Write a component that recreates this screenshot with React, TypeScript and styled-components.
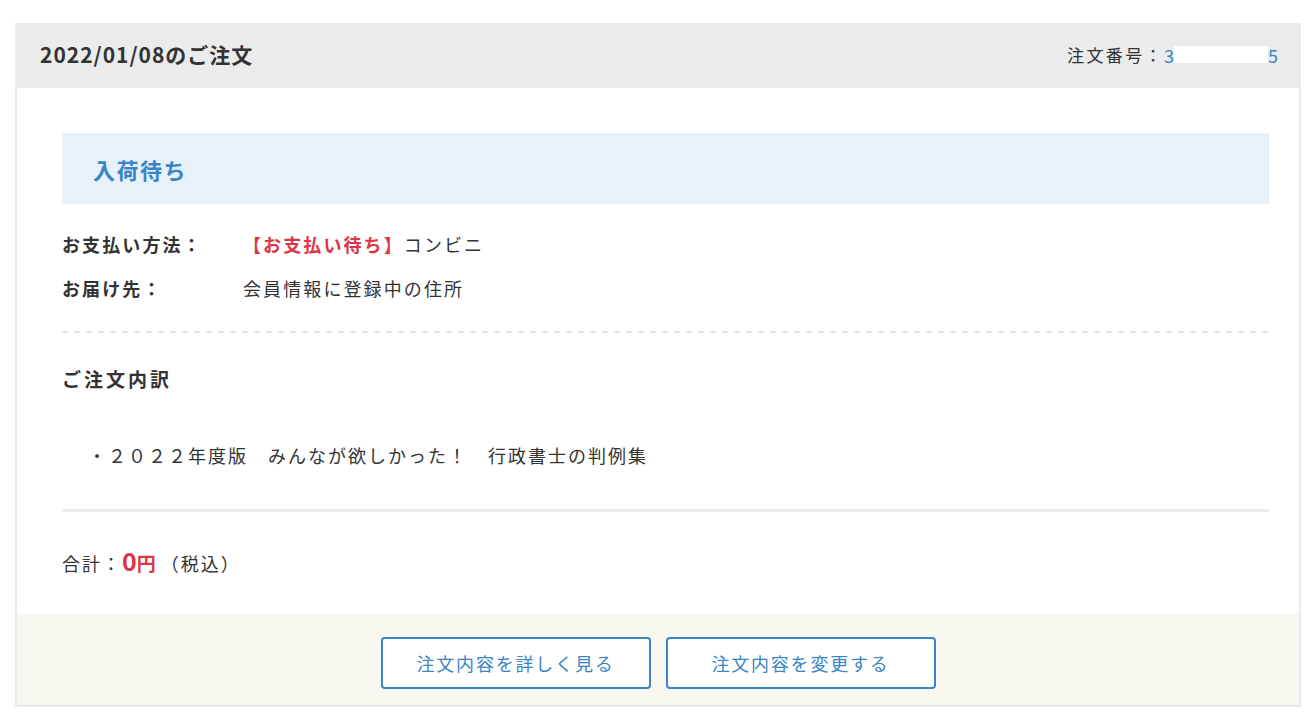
import styled, {createGlobalStyle} from "styled-components";

const GlobalStyle = createGlobalStyle`
  body {
    margin: 0;
    background: #fff;
    font-family: "Noto Sans CJK JP", "Noto Sans", sans-serif;
    color: #333;
  }
`;

const Page = styled.div`
  padding: 23px 7px 16px 15px;
`;

const Card = styled.section`
  border: 2px solid #eaeaea;
  border-top: none;
  background: #fff;
`;

const Header = styled.header`
  display: flex;
  align-items: center;
  justify-content: space-between;
  height: 65px;
  padding: 0 23px 0 25px;
  margin: 0 -2px;
  background: #ebebeb;
`;

const Title = styled.h2`
  margin: 0 0 3px;
  font-size: 21px;
  font-weight: 700;
  letter-spacing: 1px;
  color: #333;
`;

const OrderNo = styled.div`
  display: flex;
  align-items: center;
  margin-bottom: 2px;
  font-size: 17px;
  letter-spacing: 2.4px;
  color: #333;
`;

const Num = styled.span`
  color: #3a85c6;
  font-size: 18px;
  letter-spacing: 0;
`;

const Masked = styled.span`
  display: inline-block;
  width: 94px;
  height: 17px;
  background: #fff;
`;

const Body = styled.div`
  padding: 45px 30px 36px 45px;
`;

const Status = styled.div`
  display: flex;
  align-items: center;
  height: 71px;
  padding: 0 31px;
  background: #e6f1f9;
  color: #3a85c6;
  font-size: 22px;
  font-weight: 700;
  letter-spacing: 1.5px;
`;

const InfoList = styled.dl`
  display: grid;
  grid-template-columns: 181px 1fr;
  row-gap: 16px;
  margin: 26px 0 0;
  padding-bottom: 29px;
  font-size: 18px;
  line-height: 28px;
  letter-spacing: 2.1px;
`;

const Term = styled.dt`
  font-weight: 700;
`;

const Desc = styled.dd`
  margin: 0;
`;

const Bracket = styled.span`
  color: #dc3545;
  font-weight: 700;
`;

const Dashed = styled.hr`
  height: 2px;
  margin: 0;
  border: none;
  background: linear-gradient(to right, #e3e3e3 0 6px, transparent 6px 12px) repeat-x;
  background-size: 12px 2px;
`;

const SubTitle = styled.h3`
  margin: 31px 0 0;
  font-size: 19px;
  font-weight: 700;
  line-height: 30px;
  letter-spacing: 3px;
`;

const ItemList = styled.ul`
  list-style: none;
  margin: 0;
  padding: 47px 0 40px 26px;
  border-bottom: 3px solid #ebebeb;
  font-size: 18px;
  line-height: 28px;
  letter-spacing: 2px;
`;

const Total = styled.p`
  display: flex;
  align-items: baseline;
  margin: 0;
  padding-top: 33px;
  font-size: 18px;
  line-height: 30px;
  letter-spacing: 2px;
`;

const Price = styled.span<{ size: number }>`
  color: #dc3545;
  font-weight: 700;
  font-size: ${(props) => props.size}px;
  letter-spacing: 0;
  & + & {
    margin-right: 5px;
  }
`;

const Footer = styled.footer`
  display: flex;
  justify-content: center;
  gap: 15px;
  padding: 23px 0 16px;
  background: #f7f7f0;
`;

const Button = styled.button`
  width: 270px;
  height: 52px;
  border: 2px solid #3a85c6;
  border-radius: 4px;
  background: #fff;
  color: #3a85c6;
  font-family: inherit;
  font-size: 18px;
  letter-spacing: 1.8px;
  cursor: pointer;
`;

export default function App() {
  return (
    <>
      <GlobalStyle/>
      <Page>
        <Card>
          <Header>
            <Title>2022/01/08のご注文</Title>
            <OrderNo>
              注文番号：<Num>3</Num><Masked/><Num>5</Num>
            </OrderNo>
          </Header>
          <Body>
            <Status>入荷待ち</Status>
            <InfoList>
              <Term>お支払い方法：</Term>
              <Desc><Bracket>【お支払い待ち】</Bracket>コンビニ</Desc>
              <Term>お届け先：</Term>
              <Desc>会員情報に登録中の住所</Desc>
            </InfoList>
            <Dashed/>
            <SubTitle>ご注文内訳</SubTitle>
            <ItemList>
              <li>・２０２２年度版　みんなが欲しかった！　行政書士の判例集</li>
            </ItemList>
            <Total>
              合計：<Price size={25}>0</Price><Price size={19}>円</Price>（税込）
            </Total>
          </Body>
          <Footer>
            <Button>注文内容を詳しく見る</Button>
            <Button>注文内容を変更する</Button>
          </Footer>
        </Card>
      </Page>
    </>
  );
}
